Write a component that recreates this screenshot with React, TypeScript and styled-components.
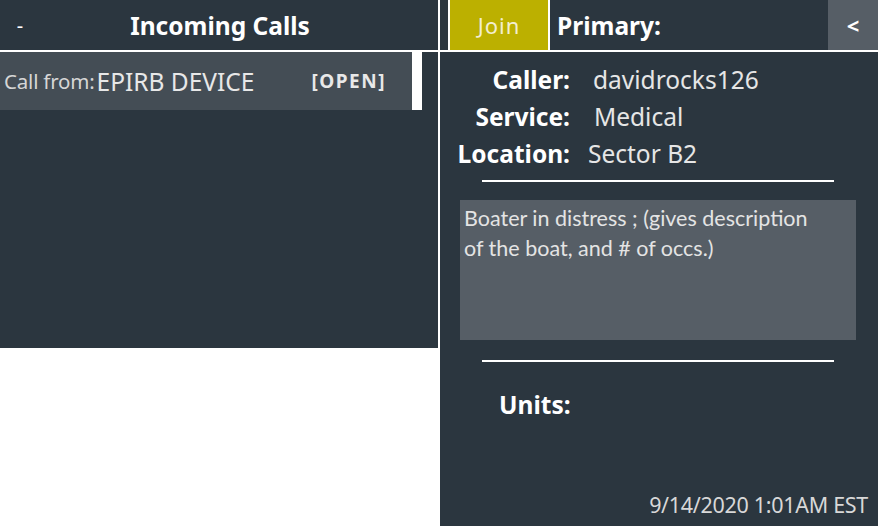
import React from 'react';
import styled, { createGlobalStyle } from 'styled-components';

const GlobalStyle = createGlobalStyle`
  html, body {
    margin: 0;
    padding: 0;
    background: #ffffff;
  }
  body {
    font-family: 'Noto Sans', 'Open Sans', sans-serif;
  }
`;

const Screen = styled.div`
  width: 878px;
  height: 526px;
  display: flex;
  gap: 2px;
  align-items: flex-start;
  background: #ffffff;
  overflow: hidden;
`;

const CallsPanel = styled.div`
  width: 438px;
  height: 348px;
  background: #2b363f;
  display: flex;
  flex-direction: column;
`;

const TopBar = styled.div`
  height: 50px;
  border-bottom: 2px solid #ffffff;
  display: flex;
  align-items: center;
  color: #ffffff;
  flex-shrink: 0;
`;

const CollapseMark = styled.span`
  width: 40px;
  text-align: center;
  font-size: 20px;
`;

const PanelTitle = styled.span`
  flex: 1;
  text-align: center;
  font-weight: 700;
  font-size: 24.5px;
  padding-right: 38px;
`;

const CallRow = styled.div`
  display: flex;
  height: 58px;
`;

const CallItem = styled.div`
  width: 412px;
  background: #444d55;
  display: flex;
  align-items: center;
  padding-left: 4px;
  box-sizing: border-box;
  color: #e8e8e8;
`;

const CallPrefix = styled.span`
  font-size: 20.5px;
  color: #d6d6d6;
  letter-spacing: -0.2px;
  margin-right: 2px;
`;

const CallName = styled.span`
  font-size: 24.5px;
  flex: 1;
`;

const CallStatus = styled.span`
  font-size: 19px;
  font-weight: 700;
  letter-spacing: 1.5px;
  margin-right: 26px;
`;

const ScrollThumb = styled.div`
  width: 10px;
  background: #ffffff;
`;

const DetailPanel = styled.div`
  flex: 1;
  height: 526px;
  background: #2b363f;
  display: flex;
  flex-direction: column;
  color: #ffffff;
`;

const JoinButton = styled.div`
  margin-left: 8px;
  width: 98px;
  height: 100%;
  border-left: 2px solid #ffffff;
  border-right: 2px solid #ffffff;
  background: #bcb000;
  color: #f3eed0;
  font-size: 22px;
  letter-spacing: 1px;
  display: flex;
  align-items: center;
  justify-content: center;
`;

const PrimaryLabel = styled.span`
  flex: 1;
  font-weight: 700;
  font-size: 24.5px;
  padding-left: 7px;
`;

const BackButton = styled.div`
  width: 50px;
  height: 100%;
  background: #565e66;
  display: flex;
  align-items: center;
  justify-content: center;
  font-weight: 700;
  font-size: 22px;
`;

const InfoGrid = styled.div`
  display: grid;
  grid-template-columns: 130px auto;
  column-gap: 22px;
  padding-top: 9px;
`;

const InfoLabel = styled.span`
  text-align: right;
  font-weight: 700;
  font-size: 24.5px;
  line-height: 37px;
`;

const InfoValue = styled.span<{ $shift?: number }>`
  font-size: 24.5px;
  line-height: 37px;
  color: #e6e6e6;
  margin-left: ${({ $shift }) => $shift ?? 0}px;
`;

const Rule = styled.div<{ $top?: number }>`
  height: 2px;
  background: #ffffff;
  margin: ${({ $top }) => $top ?? 0}px 44px 0 42px;
`;

const NotesBox = styled.div`
  margin: 18px 22px 20px 20px;
  height: 140px;
  background: #565e66;
  color: #e4e4e4;
  font-family: 'Lato', 'Noto Sans', sans-serif;
  font-size: 21.5px;
  line-height: 30px;
  padding: 3px 26px 3px 4px;
  box-sizing: border-box;
`;

const UnitsLabel = styled.div`
  font-weight: 700;
  font-size: 24.5px;
  padding-left: 59px;
  margin-top: 26px;
`;

const Timestamp = styled.div`
  margin-top: auto;
  align-self: flex-end;
  padding: 0 10px 7px 0;
  font-size: 21.5px;
  color: #d8d8d8;
  letter-spacing: -0.3px;
`;

export default function App() {
  return (
    <>
      <GlobalStyle />
      <Screen>
        <CallsPanel>
          <TopBar>
            <CollapseMark>-</CollapseMark>
            <PanelTitle>Incoming Calls</PanelTitle>
          </TopBar>
          <CallRow>
            <CallItem>
              <CallPrefix>Call from:</CallPrefix>
              <CallName>EPIRB DEVICE</CallName>
              <CallStatus>[OPEN]</CallStatus>
            </CallItem>
            <ScrollThumb />
          </CallRow>
        </CallsPanel>
        <DetailPanel>
          <TopBar>
            <JoinButton>Join</JoinButton>
            <PrimaryLabel>Primary:</PrimaryLabel>
            <BackButton>&lt;</BackButton>
          </TopBar>
          <InfoGrid>
            <InfoLabel>Caller:</InfoLabel>
            <InfoValue $shift={1}>davidrocks126</InfoValue>
            <InfoLabel>Service:</InfoLabel>
            <InfoValue $shift={2}>Medical</InfoValue>
            <InfoLabel>Location:</InfoLabel>
            <InfoValue $shift={-4}>Sector B2</InfoValue>
          </InfoGrid>
          <Rule $top={8} />
          <NotesBox>Boater in distress ; (gives description of the boat, and # of occs.)</NotesBox>
          <Rule />
          <UnitsLabel>Units:</UnitsLabel>
          <Timestamp>9/14/2020 1:01AM EST</Timestamp>
        </DetailPanel>
      </Screen>
    </>
  );
}
